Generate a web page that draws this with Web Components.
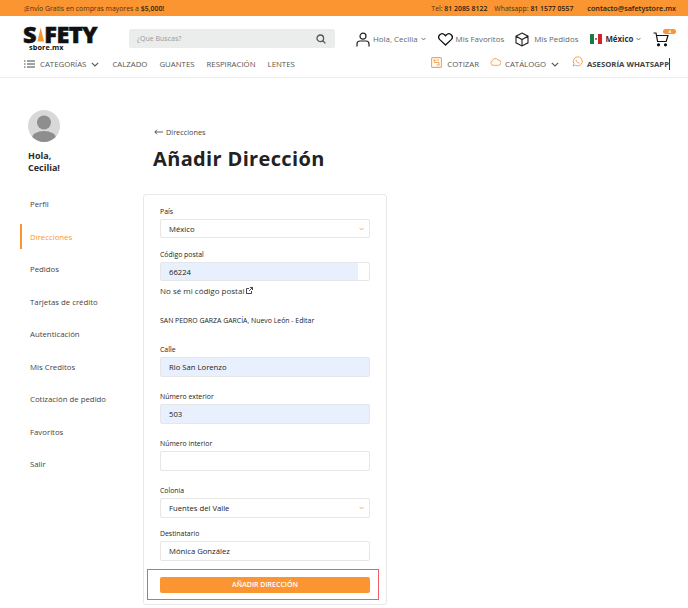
<!DOCTYPE html>
<html lang="es"><head><meta charset="utf-8"><title>Añadir Dirección</title>
<style>
html,body{margin:0;padding:0;height:608px;overflow:hidden;background:#fff;font-family:"Open Sans",sans-serif;color:#222}
</style></head><body>
<site-topbar></site-topbar>
<site-header></site-header>
<account-page>
  <account-nav slot="side"></account-nav>
  <address-form slot="main"></address-form>
</account-page>
<script>
const def=(name,html)=>customElements.define(name,class extends HTMLElement{constructor(){super();this.attachShadow({mode:'open'}).innerHTML=html(this)}});
const chev='<svg width="8" height="5" viewBox="0 0 8 5" fill="none" stroke="currentColor" stroke-width="1.1"><path d="M.8.8 4 4l3.2-3.2"/></svg>';
const small=chev.replace('width="8" height="5"','width="5" height="4"').replace('stroke-width="1.1"','stroke-width="1.5"');
def('site-topbar',()=>`<style>
:host{display:flex;height:16px;background:#fb9531;align-items:center;font-size:6.9px;color:#4a3317;padding:0 12px 0 24px;box-sizing:border-box}
b{font-weight:600;color:#2c1e0d}.l{flex:1}span+span{margin-left:7px}.m{margin-left:14px!important;font-size:7.2px}
</style><span class="l">¡Envío Gratis en compras mayores a <b>$5,000!</b></span><span>Tel: <b>81 2085 8122</b></span><span>Whatsapp: <b>81 1577 0557</b></span><span class="m"><b>contacto@safetystore.mx</b></span>`);
def('site-header',()=>`<style>
:host{display:block;height:61px;border-bottom:1px solid #eee;box-sizing:content-box;color:#555;font-size:7.9px}
.r1{display:flex;align-items:flex-start;height:41px;padding-left:23px}
.logo{width:74px;margin-top:10px;line-height:1;color:#111}
.logo .a{font:800 23.5px/17px "Open Sans",sans-serif;letter-spacing:-.6px;display:flex;-webkit-text-stroke:.5px #111;height:17px;align-items:center}
.logo svg{margin:0 0 0 1px}
.logo .b{font:700 7.3px/8px "Open Sans",sans-serif;margin-left:6px;letter-spacing:.1px}
.search{width:206px;height:19px;margin:13px 0 0 32px;background:#ebecec;border-radius:2px;display:flex;align-items:center;justify-content:space-between;padding:0 9px 0 8px;box-sizing:border-box;color:#999;font-size:7px}
.acts{display:flex;align-items:center;margin:13px 0 0 21px;height:20px;color:#666}
.acts>span{display:flex;align-items:center;gap:4px}
.acts svg{flex:none}
.flag{display:flex;width:12px;height:10px;position:relative}.flag i{flex:1}
.flag u{position:absolute;left:5px;top:4px;width:2px;height:2px;border-radius:50%;background:#7a5a20}
.cart{position:relative;margin-left:12px}
.badge{position:absolute;right:-7px;top:-3px;width:13px;height:5px;border-radius:3px;background:#fb9531;color:#fff;font:700 4px/5px "Open Sans",sans-serif;text-align:center}
.r2{display:flex;align-items:center;height:14px;padding:0 18px 0 24px;color:#555;font-size:7.8px}
.r2 span{display:flex;align-items:center}
.cat{gap:5px}.links{display:flex;gap:12px;margin-left:13px}.sp{flex:1}
.right{display:flex;align-items:center}
.cur{width:1px;height:12px;background:#333}
</style>
<div class="r1">
 <div class="logo"><div class="a">S<svg width="9" height="17" viewBox="0 0 9 17"><path d="M4.500 0 8.500 17H.5z" fill="#f6932d"/></svg>FETY</div><div class="b">sbore.mx</div></div>
 <div class="search"><span>¿Que Buscas?</span><svg width="10" height="10" viewBox="0 0 10 10" fill="none" stroke="#555" stroke-width="1.3"><circle cx="4.3" cy="4.3" r="3.3"/><path d="m6.8 6.8 2.6 2.6"/></svg></div>
 <div class="acts">
  <span style="gap:3px"><svg width="14" height="15" viewBox="0 0 14 15" fill="none" stroke="#222" stroke-width="1.2"><circle cx="7" cy="4.2" r="3"/><path d="M1 14.5V12a3 3 0 0 1 3-3h6a3 3 0 0 1 3 3v2.5"/></svg>Hola, Cecilia ${small}</span>
  <span style="margin-left:12px;gap:3px"><svg width="15" height="13" viewBox="0 0 15 13" fill="none" stroke="#111" stroke-width="1.3"><path d="M7.5 12 1.8 6.6a3.4 3.4 0 0 1 0-4.8 3.4 3.4 0 0 1 4.7 0l1 1 1-1a3.4 3.4 0 0 1 4.7 0 3.4 3.4 0 0 1 0 4.8z"/></svg>Mis Favoritos</span>
  <span style="margin-left:11px;gap:5px"><svg width="14" height="15" viewBox="0 0 14 15" fill="none" stroke="#222" stroke-width="1.1"><path d="M7 1 13 4.2v6.6L7 14 1 10.8V4.2zM1 4.2 7 7.5l6-3.3M7 7.5V14"/></svg>Mis Pedidos</span>
  <span style="margin-left:12px;gap:3px"><span class="flag"><i style="background:#1a7a45"></i><i style="background:#fff"></i><i style="background:#d2232a"></i><u></u></span><b style="color:#333;font-weight:700">México</b>${small}</span>
  <span class="cart"><svg width="16" height="15" viewBox="0 0 16 15" fill="none" stroke="#111" stroke-width="1.2"><path d="M.5 1H3l1.6 8.500h8.600L15 3.500H3.500"/><circle cx="5.500" cy="12.800" r="1" fill="#111"/><circle cx="12.500" cy="12.800" r="1" fill="#111"/></svg><span class="badge">4</span></span>
 </div>
</div>
<div class="r2">
 <span class="cat"><svg width="11" height="8" viewBox="0 0 11 8" stroke="#444" stroke-width="1"><path d="M3 1h8M3 4h8M3 7h8M0 1h1.500M0 4h1.500M0 7h1.500"/></svg>CATEGORÍAS ${chev}</span>
 <span class="links"><span>CALZADO</span><span>GUANTES</span><span>RESPIRACIÓN</span><span>LENTES</span></span>
 <span class="sp"></span>
 <span class="right">
  <svg width="11" height="11" viewBox="0 0 11 11" fill="none" stroke="#f6a355" stroke-width="1.1" style="margin:-4px 5px 0 0"><rect x=".6" y=".6" width="9.800" height="9.800" rx="1"/><path d="M5.500 3h2.500M3 5.500h5M5.500 8H8v-2.500M3 3h1v1H3z"/></svg><span>COTIZAR</span>
  <svg width="11" height="9" viewBox="0 0 11 9" fill="none" stroke="#f6a355" stroke-width="1" style="margin:-5px 4px 0 11px"><path d="M3 8.300A2.300 2.300 0 0 1 2.500 3.800 3 3 0 0 1 8 3a2.600 2.600 0 0 1 .5 5.300z"/></svg><span style="gap:5px">CATÁLOGO ${chev}</span>
  <svg width="11" height="11" viewBox="0 0 11 11" fill="none" stroke="#f6a355" stroke-width="1" style="margin:-5px 4px 0 13px"><path d="M1 10l.8-2.600A4.500 4.500 0 1 1 3.500 9.200z"/><path d="M4 3.500c0 2 1.500 3.500 3.500 3.700"/></svg><b style="font-weight:700;color:#444;white-space:nowrap;font-size:7.75px">ASESORÍA WHATSAPP</b><i class="cur"></i>
 </span>
</div>`);
def('account-page',()=>`<style>
:host{display:flex;align-items:flex-start;padding-top:32px}
.s{width:143px;flex:none}.m{flex:1}
</style><div class="s"><slot name="side"></slot></div><div class="m"><slot name="main"></slot></div>`);
def('account-nav',()=>`<style>
:host{display:block;padding-left:20px;font-size:7.8px;color:#444}
.av{width:32px;height:32px;border-radius:50%;background:#d8d8d8;margin-left:8px;overflow:hidden;display:block}
.h{margin:8px 0 17.500px 8px;font-weight:700;font-size:9px;line-height:12px;color:#2b2b2b}
a{display:flex;align-items:center;height:25px;margin-bottom:7.500px;padding-left:8px;border-left:2px solid transparent}
a.on{border-color:#fb9531;color:#fb9531}
</style>
<svg class="av" viewBox="0 0 32 32"><circle cx="16" cy="12.500" r="7" fill="#8e8e8e"/><ellipse cx="16" cy="28" rx="12" ry="7" fill="#8e8e8e"/></svg>
<div class="h">Hola,<br>Cecilia!</div>
<a>Perfil</a><a class="on">Direcciones</a><a>Pedidos</a><a>Tarjetas de crédito</a><a>Autenticación</a><a>Mis Creditos</a><a>Cotización de pedido</a><a>Favoritos</a><a>Salir</a>`);
def('form-field',el=>{
 const t=el.getAttribute('type')||'text',v=el.getAttribute('value')||'',f=el.hasAttribute('filled'),short=el.hasAttribute('short');
 return `<style>
:host{display:block;margin-top:${el.getAttribute('gap')||0}px}
label{display:block;height:14px;font-size:6.900px;line-height:14px;color:#222}
.b{height:${el.getAttribute('h')||20}px;border:1px solid #e6e6e6;border-radius:2px;box-sizing:border-box;display:flex;align-items:center;justify-content:space-between;padding:0 5px 0 8px;font-size:7.700px;color:#222;position:relative;background:${f&&!short?'#e8f0fe':'#fff'}}
.b span{position:relative}
.fill{position:absolute;left:0;top:0;bottom:0;width:197px;background:#e8f0fe}
svg{color:#f6a355}
</style><label>${el.getAttribute('label')}</label><div class="b">${short?'<i class="fill"></i>':''}<span>${v}</span>${t==='select'?small:''}</div>`});
def('address-form',()=>`<style>
:host{display:block;font-size:8px;color:#333}
.back{display:flex;align-items:center;gap:3px;margin:16px 0 0 11px;height:12px;font-size:7.300px;color:#444}
h1{margin:5px 0 0 10px;font-size:20px;line-height:32px;font-weight:700;color:#222;letter-spacing:.35px}
.card{width:244px;height:411px;box-sizing:border-box;margin-top:19px;border:1px solid #e8e8e8;border-radius:3px;padding:10px 16px 0}
.nos{display:flex;align-items:center;gap:2px;margin-top:3px;height:12px;font-size:8px;color:#333}
.loc{margin-top:19px;height:12px;line-height:12px;font-size:6.900px;color:#222;white-space:nowrap}
.red{margin:8px -9px 0 -13px;border:1px solid #ee5f68;padding:7px 8px 5px 12px;height:31px;box-sizing:border-box}
button{display:block;width:100%;height:16px;border:0;border-radius:2px;background:#fb9531;color:#fff;font:600 7px/16px "Open Sans",sans-serif;padding:0}
</style>
<div class="back"><svg width="9" height="6" viewBox="0 0 9 6" fill="none" stroke="#333" stroke-width=".8"><path d="M9 3H1M3 .7.8 3 3 5.300"/></svg>Direcciones</div>
<h1>Añadir Dirección</h1>
<div class="card">
 <form-field label="País" type="select" value="México" h="19"></form-field>
 <form-field label="Código postal" value="66224" filled short gap="10" h="19"></form-field>
 <div class="nos">No sé mi código postal <svg width="7" height="7" viewBox="0 0 7 7" fill="none" stroke="#333" stroke-width=".9"><path d="M5.500 4v2.500h-5v-5H3M3 4l3.500-3.500M4 .5h2.500V3"/></svg></div>
 <div class="loc">SAN PEDRO GARZA GARCÍA, Nuevo León - Editar</div>
 <form-field label="Calle" value="Rio San Lorenzo" filled gap="16"></form-field>
 <form-field label="Número exterior" value="503" filled gap="13"></form-field>
 <form-field label="Número interior" gap="13"></form-field>
 <form-field label="Colonia" type="select" value="Fuentes del Valle" gap="13"></form-field>
 <form-field label="Destinatario" value="Mónica González" gap="9"></form-field>
 <div class="red"><button>AÑADIR DIRECCIÓN</button></div>
</div>`);
</script>
</body></html>
